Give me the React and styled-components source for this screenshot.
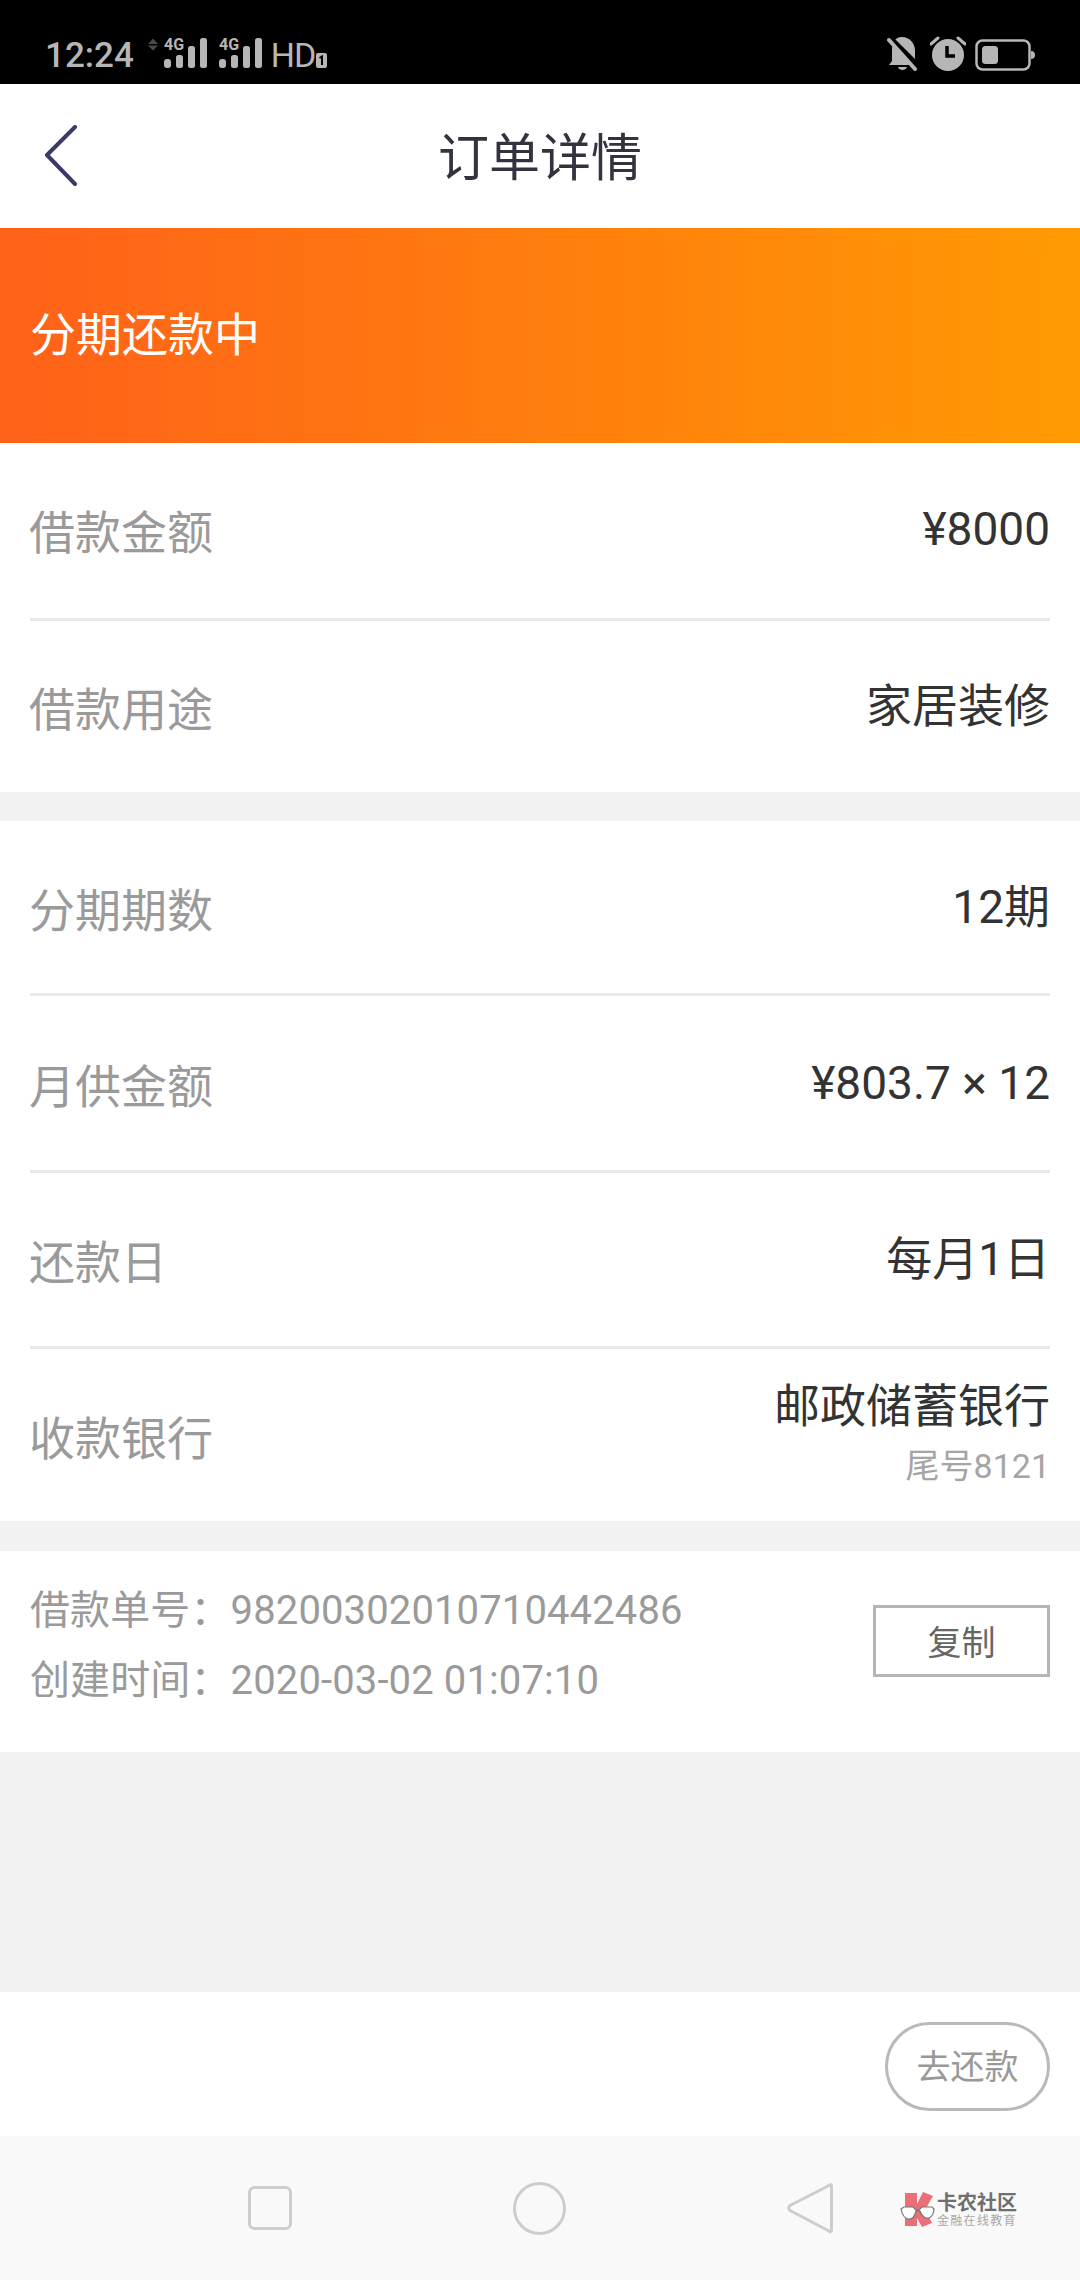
import React from 'react';
import styled, { createGlobalStyle } from 'styled-components';

const Global = createGlobalStyle`
  html, body {
    margin: 0;
    padding: 0;
    background: #f2f2f2;
    font-family: Roboto, "Noto Sans CJK SC", sans-serif;
  }
`;

const Page = styled.div`
  width: 1080px;
  height: 2280px;
  display: flex;
  flex-direction: column;
  background: #f2f2f2;
  overflow: hidden;
`;

/* status bar */
const StatusBar = styled.div`
  height: 84px;
  flex: none;
  background: #000;
  color: #b6b6b6;
  display: flex;
  align-items: flex-end;
  justify-content: space-between;
  padding: 0 45px 16px 45px;
  box-sizing: border-box;
`;

const StatusGroup = styled.div`
  display: flex;
  align-items: flex-end;
  margin-bottom: ${p => p.$drop || 0}px;
`;

const Clock = styled.span`
  font-size: 35px;
  line-height: 35px;
  font-weight: 500;
  margin: 0 14px -5px 0;
`;

const HdLabel = styled.span`
  font-size: 34px;
  line-height: 35px;
  letter-spacing: -1px;
  margin: 0 1px -5px 9px;
`;

const SignalLabel = styled.text`
  font-family: Roboto, sans-serif;
  font-size: 16px;
  font-weight: 700;
  fill: #b6b6b6;
`;

const SignalIcon = ({ arrows }) => (
  <svg
    width={arrows ? 59 : 43}
    height="36"
    viewBox={arrows ? '-16 -6 59 36' : '0 -6 43 36'}
    style={{ marginLeft: arrows ? 0 : 12 }}
  >
    {arrows && (
      <g fill="#4a4a4a">
        <path d="M-16 6 L-11 0.5 L-6 6 Z" />
        <path d="M-16 7.5 L-6 7.5 L-11 12.5 Z" />
      </g>
    )}
    <SignalLabel x="0" y="11.5">4G</SignalLabel>
    <g fill="#b6b6b6">
      <rect x="0" y="21" width="7" height="9" rx="3" />
      <rect x="12" y="17" width="7" height="13" rx="2.5" />
      <rect x="24" y="8" width="7" height="22" rx="2.5" />
      <rect x="36" y="0" width="7" height="30" rx="2.5" />
    </g>
  </svg>
);

const SimBadge = () => (
  <svg width="11" height="15" viewBox="0 0 11 15">
    <rect width="11" height="15" rx="2" fill="#b6b6b6" />
    <path d="M3.5 5 L6 3.5 V12" stroke="#000" strokeWidth="2" fill="none" />
  </svg>
);

const BellOff = () => (
  <svg width="30" height="34" viewBox="0 0 30 34">
    <path d="M15 0 C7 0 5 7 5 13 V24 L2 28 H27 L28 28 V13 C28 7 23 0 15 0 Z" fill="#b6b6b6" />
    <path d="M11 30 H20 C19 34 12 34 11 30 Z" fill="#b6b6b6" />
    <path d="M0 -1 L32 31" stroke="#000" strokeWidth="7" />
    <path d="M2 3 L28 32" stroke="#b6b6b6" strokeWidth="4" strokeLinecap="round" />
  </svg>
);

const AlarmClock = () => (
  <svg width="36" height="36" viewBox="0 0 36 36" style={{ marginLeft: 13 }}>
    <circle cx="18" cy="20" r="16" fill="#b6b6b6" />
    <path d="M17 11 V21 H25" stroke="#000" strokeWidth="3.5" fill="none" />
    <path d="M1 9 L8 3 M35 9 L28 3" stroke="#b6b6b6" strokeWidth="3" strokeLinecap="round" />
  </svg>
);

const Battery = () => (
  <svg width="60" height="32" viewBox="0 0 60 32" style={{ marginLeft: 9 }}>
    <rect x="1.5" y="1.5" width="53" height="29" rx="6" fill="none" stroke="#b6b6b6" strokeWidth="2.5" />
    <rect x="7" y="7" width="16" height="18" rx="3.5" fill="#b6b6b6" />
    <path d="M56 12 C59 12 60 14 60 16 C60 18 59 20 56 20 Z" fill="#b6b6b6" />
  </svg>
);

/* header */
const Header = styled.header`
  position: relative;
  height: 144px;
  flex: none;
  background: #fff;
  display: flex;
  align-items: center;
  justify-content: center;
  padding-bottom: 5px;
  box-sizing: border-box;
`;

const BackButton = styled.svg`
  position: absolute;
  left: 44px;
  top: 41px;
`;

const Title = styled.h1`
  margin: 0;
  font-size: 51px;
  font-weight: 400;
  color: #33333f;
`;

const Banner = styled.div`
  height: 215px;
  flex: none;
  display: flex;
  align-items: center;
  padding: 0 30px 10px;
  box-sizing: border-box;
  background: linear-gradient(90deg, #ff6119 0%, #ff9a03 100%);
  color: #fff;
  font-size: 46px;
`;

/* detail rows */
const Section = styled.section`
  flex: none;
  background: #fff;
  padding: 0 30px;
  margin-bottom: ${p => p.$gap || 0}px;
`;

const Row = styled.div`
  height: ${p => p.$h}px;
  display: flex;
  align-items: center;
  justify-content: space-between;
  padding-bottom: ${p => p.$lift || 0}px;
  box-sizing: border-box;
  border-bottom: ${p => (p.$last ? 'none' : '3px solid #e9e9e9')};
`;

const Label = styled.span`
  font-size: 46px;
  margin-left: -1px;
  color: #9a9a9a;
`;

const Value = styled.span`
  font-size: 46px;
  line-height: 60px;
  color: #333;
`;

const ValueStack = styled.div`
  display: flex;
  flex-direction: column;
  align-items: flex-end;
  padding-bottom: 8px;
`;

const SubValue = styled.span`
  font-size: 34px;
  line-height: 40px;
  margin-top: 10px;
  color: #a5a5a5;
`;

/* order info */
const InfoCard = styled.section`
  height: 201px;
  flex: none;
  background: #fff;
  display: flex;
  align-items: center;
  justify-content: space-between;
  padding: 0 30px 12px;
  box-sizing: border-box;
`;

const InfoLines = styled.div`
  display: flex;
  flex-direction: column;
`;

const InfoLine = styled.span`
  font-size: 40px;
  line-height: 70px;
  letter-spacing: 0.12px;
  color: #9a9a9a;
`;

const CopyButton = styled.button`
  width: 177px;
  height: 72px;
  margin-top: -10px;
  padding: 0;
  background: #fff;
  border: 3px solid #b5b5b5;
  border-radius: 0;
  font: inherit;
  font-size: 34px;
  color: #666;
`;

const Spacer = styled.div`
  flex: 1;
`;

const ActionBar = styled.div`
  height: 144px;
  flex: none;
  background: #fff;
  display: flex;
  align-items: center;
  justify-content: flex-end;
  padding: 0 30px;
  box-sizing: border-box;
`;

const RepayButton = styled.button`
  width: 165px;
  height: 89px;
  margin-top: 4px;
  padding: 0 0 4px;
  background: #fff;
  border: 3px solid #b9b9b9;
  border-radius: 45px;
  font: inherit;
  font-size: 34px;
  color: #999;
`;

/* navigation bar */
const NavBar = styled.nav`
  position: relative;
  height: 144px;
  flex: none;
  background: #f9f9f9;
  display: flex;
  align-items: center;
  padding-left: 248px;
  box-sizing: border-box;
`;

const NavIcon = styled.svg`
  display: block;
  margin-right: ${p => p.$mr || 0}px;
`;

const Watermark = styled.div`
  position: absolute;
  left: 900px;
  top: 56px;
  width: 120px;
  height: 36px;
  display: flex;
  align-items: center;
`;

const WatermarkText = styled.div`
  margin-left: 2px;
  display: flex;
  flex-direction: column;
  align-items: flex-start;
`;

const WatermarkTitle = styled.span`
  font-size: 20px;
  line-height: 21px;
  font-weight: 700;
  color: #6f6f6f;
  white-space: nowrap;
`;

const WatermarkSub = styled.span`
  font-size: 12px;
  line-height: 14px;
  letter-spacing: 1.3px;
  color: #a8a8a8;
  white-space: nowrap;
`;

const LogoMark = () => (
  <svg width="35" height="36" viewBox="0 0 35 36" style={{ flex: 'none' }}>
    <path d="M5 1 H17 V12 L23 0 L33 4 L25 18 L32 31 L22 35 L17 26 V34 H5 Z" fill="#ea6f79" />
    <path d="M1 17 L4 15 H13 L16 18 H19 L22 15 H32 L34 17 C34 23 30 27 26 26 C23 25 21 22 20 19 H16 C15 23 13 28 8 27 C4 26 2 22 1 17 Z" fill="#fff" stroke="#777" strokeWidth="1.2" />
  </svg>
);

const App = () => (
  <Page>
    <Global />
    <StatusBar>
      <StatusGroup>
        <Clock>12:24</Clock>
        <SignalIcon arrows />
        <SignalIcon />
        <HdLabel>HD</HdLabel>
        <SimBadge />
      </StatusGroup>
      <StatusGroup $drop={-3}>
        <BellOff />
        <AlarmClock />
        <Battery />
      </StatusGroup>
    </StatusBar>

    <Header>
      <BackButton width="34" height="62" viewBox="0 0 34 62">
        <path d="M31 2 L3 30 L31 59" fill="none" stroke="#3a3a68" strokeWidth="4" strokeLinecap="round" strokeLinejoin="round" />
      </BackButton>
      <Title>订单详情</Title>
    </Header>

    <Banner>分期还款中</Banner>

    <Section $gap={29}>
      <Row $h={178} $lift={3}>
        <Label>借款金额</Label>
        <Value>¥8000</Value>
      </Row>
      <Row $h={171} $lift={2} $last>
        <Label>借款用途</Label>
        <Value>家居装修</Value>
      </Row>
    </Section>

    <Section $gap={30}>
      <Row $h={175}>
        <Label>分期期数</Label>
        <Value>12期</Value>
      </Row>
      <Row $h={177}>
        <Label>月供金额</Label>
        <Value>¥803.7 × 12</Value>
      </Row>
      <Row $h={176} $lift={2}>
        <Label>还款日</Label>
        <Value>每月1日</Value>
      </Row>
      <Row $h={172} $last>
        <Label>收款银行</Label>
        <ValueStack>
          <Value>邮政储蓄银行</Value>
          <SubValue>尾号8121</SubValue>
        </ValueStack>
      </Row>
    </Section>

    <InfoCard>
      <InfoLines>
        <InfoLine>借款单号：98200302010710442486</InfoLine>
        <InfoLine>创建时间：2020-03-02 01:07:10</InfoLine>
      </InfoLines>
      <CopyButton>复制</CopyButton>
    </InfoCard>

    <Spacer />

    <ActionBar>
      <RepayButton>去还款</RepayButton>
    </ActionBar>

    <NavBar>
      <NavIcon $mr={221} width="44" height="44" viewBox="0 0 44 44">
        <rect x="1.5" y="1.5" width="41" height="41" rx="5" fill="none" stroke="#cdcdcd" strokeWidth="3" />
      </NavIcon>
      <NavIcon $mr={221} width="53" height="53" viewBox="0 0 53 53">
        <circle cx="26.5" cy="26.5" r="25" fill="none" stroke="#cdcdcd" strokeWidth="3" />
      </NavIcon>
      <NavIcon width="46" height="52" viewBox="0 0 46 52">
        <path d="M43 3 C44 2 44.5 3 44.5 4 V48 C44.5 50 43 50.5 42 49 L3 28.5 C1.5 27 1.5 25 3 23.5 Z" fill="none" stroke="#cdcdcd" strokeWidth="3" strokeLinejoin="round" />
      </NavIcon>
      <Watermark>
        <LogoMark />
        <WatermarkText>
          <WatermarkTitle>卡农社区</WatermarkTitle>
          <WatermarkSub>金融在线教育</WatermarkSub>
        </WatermarkText>
      </Watermark>
    </NavBar>
  </Page>
);

export default App;
